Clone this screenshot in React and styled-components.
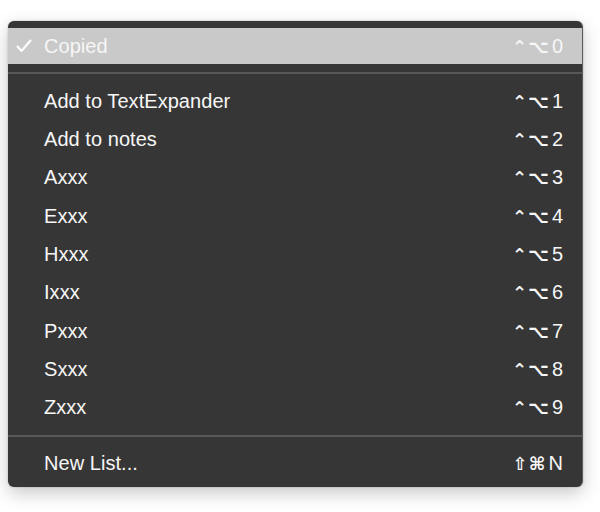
import React from "react";
import styled, { createGlobalStyle } from "styled-components";

const GlobalStyle = createGlobalStyle`
  body {
    margin: 0;
    background: #ffffff;
    font-family: "Liberation Sans", Arial, sans-serif;
  }
`;

const Page = styled.div`
  width: 600px;
  height: 512px;
  padding: 21px 17px 0 8px;
  box-sizing: border-box;
`;

const Menu = styled.div`
  background: #363636;
  border-radius: 6px;
  padding: 7px 0 5px;
  box-shadow: 0 6px 18px rgba(0, 0, 0, 0.22), 0 0 2px rgba(0, 0, 0, 0.25);
  border-right: 1px solid #5a5a5a;
  overflow: hidden;
`;

const Item = styled.div`
  display: flex;
  align-items: center;
  height: ${({ $tall }) => ($tall ? "38.35px" : "36px")};
  padding: 0 19px 0 8px;
  background: ${({ $active }) => ($active ? "#c9c9c9" : "transparent")};
  color: #f6f6f6;
  font-size: 20px;
`;

const CheckSlot = styled.span`
  width: 28px;
  flex: none;
  display: flex;
  align-items: center;
`;

const Label = styled.span`
  flex: 1;
  letter-spacing: 0.05px;
`;

const Shortcut = styled.span`
  display: flex;
  align-items: center;
  font-family: "DejaVu Sans", "Liberation Sans", sans-serif;
  font-size: 18px;
  font-weight: 700;
`;

const Sym = styled.span`
  margin-right: ${({ $gap }) => $gap || 1}px;
`;

const Key = styled.span`
  font-family: "Liberation Sans", Arial, sans-serif;
  font-weight: 400;
  font-size: 20px;
  margin-left: 2px;
`;

const Separator = styled.div`
  height: ${({ $h }) => $h}px;
  display: flex;
  align-items: center;

  &::after {
    content: "";
    display: block;
    width: 100%;
    height: 2px;
    background: #575757;
  }
`;

const Check = () => (
  <svg width="16" height="14" viewBox="0 0 16 14">
    <path
      d="M1.5 7.5 L5.5 12 L14.5 1.5"
      fill="none"
      stroke="#ffffff"
      strokeWidth="2"
      strokeLinecap="round"
      strokeLinejoin="round"
    />
  </svg>
);

const items = [
  ["Add to TextExpander", "1"],
  ["Add to notes", "2"],
  ["Axxx", "3"],
  ["Exxx", "4"],
  ["Hxxx", "5"],
  ["Ixxx", "6"],
  ["Pxxx", "7"],
  ["Sxxx", "8"],
  ["Zxxx", "9"],
];

function CtrlOpt({ k }) {
  return (
    <Shortcut>
      <Sym>⌃</Sym>
      <Sym>⌥</Sym>
      <Key>{k}</Key>
    </Shortcut>
  );
}

export default function App() {
  return (
    <Page>
      <GlobalStyle />
      <Menu>
        <Item $active>
          <CheckSlot>
            <Check />
          </CheckSlot>
          <Label>Copied</Label>
          <CtrlOpt k="0" />
        </Item>
        <Separator $h={18} />
        {items.map(([name, k]) => (
          <Item $tall key={name}>
            <CheckSlot />
            <Label>{name}</Label>
            <CtrlOpt k={k} />
          </Item>
        ))}
        <Separator $h={17} />
        <Item $tall>
          <CheckSlot />
          <Label>New List...</Label>
          <Shortcut>
            <Sym>⇧</Sym>
            <Sym>⌘</Sym>
            <Key>N</Key>
          </Shortcut>
        </Item>
      </Menu>
    </Page>
  );
}
